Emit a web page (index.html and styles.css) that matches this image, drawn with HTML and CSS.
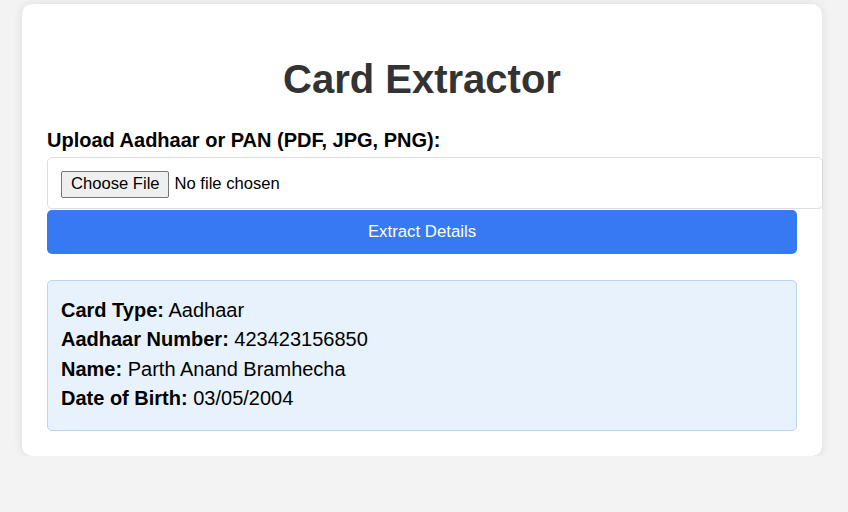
FILE: index.html
```html
<!DOCTYPE html>
<html lang="en">
<head>
<meta charset="utf-8">
<title>Card Extractor</title>
<link rel="stylesheet" href="styles.css">
</head>
<body>
  <div class="card">
    <h1 class="title">Card Extractor</h1>
    <form class="upload-form">
      <label class="field-label" for="file">Upload Aadhaar or PAN (PDF, JPG, PNG):</label>
      <input class="file-input" type="file" id="file" accept=".pdf,.jpg,.png">
      <button class="extract-btn" type="button">Extract Details</button>
    </form>
    <div class="result">
      <div class="result-line"><strong>Card Type:</strong> Aadhaar</div>
      <div class="result-line"><strong>Aadhaar Number:</strong> 423423156850</div>
      <div class="result-line"><strong>Name:</strong> Parth Anand Bramhecha</div>
      <div class="result-line"><strong>Date of Birth:</strong> 03/05/2004</div>
    </div>
  </div>
</body>
</html>
```
FILE: styles.css
```css
html, body {
  margin: 0;
  padding: 0;
}
body {
  background: #f3f3f3;
  font-family: "Liberation Sans", Arial, sans-serif;
  padding: 4px 0 0 22px;
}
.card {
  width: 750px;
  padding: 25px;
  background: #ffffff;
  border-radius: 10px;
  box-shadow: 0 0 10px rgba(0, 0, 0, 0.1);
}
.title {
  margin: 27px 0 27px;
  font-size: 40px;
  line-height: 46px;
  text-align: center;
  color: #333333;
  font-weight: bold;
}
.upload-form {
  display: flex;
  flex-direction: column;
  align-items: flex-start;
}
.field-label {
  display: block;
  font-size: 20px;
  font-weight: bold;
  line-height: 23px;
  color: #000;
  margin-bottom: 5px;
}
.file-input {
  display: block;
  box-sizing: border-box;
  width: 776px;
  height: 52px;
  padding: 12px 12px 11px 13px;
  margin: 0;
  border: 1px solid #dddddd;
  border-radius: 5px;
  font-family: "Liberation Sans", Arial, sans-serif;
  font-size: 16.6px;
  line-height: 27px;
  color: #000;
  background: #fff;
}
.file-input::file-selector-button {
  box-sizing: border-box;
  height: 27px;
  padding: 0 8px 0 9px;
  margin-right: 6px;
  border: 1px solid #767676;
  border-radius: 2px;
  background: #efefef;
  color: #000;
  font-family: "Liberation Sans", Arial, sans-serif;
  font-size: 16.6px;
}
.extract-btn {
  display: block;
  width: 750px;
  margin-top: 1px;
  padding: 13px 0 13px;
  border: none;
  border-radius: 5px;
  background: #3779f2;
  color: #ffffff;
  font-family: "Liberation Sans", Arial, sans-serif;
  font-size: 16.8px;
  line-height: 18px;
  cursor: pointer;
}
.result {
  margin-top: 26px;
  padding: 15px 13px 16px;
  background: #e8f2fd;
  border: 1px solid #b8d5f1;
  border-radius: 5px;
  font-size: 20px;
  line-height: 29.4px;
  color: #000;
}
```
